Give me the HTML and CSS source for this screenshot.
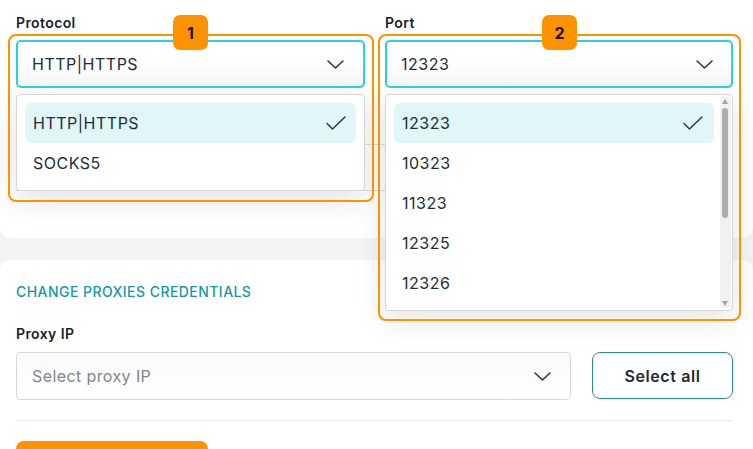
FILE: index.html
```html
<!DOCTYPE html>
<html>
<head>
<meta charset="utf-8">
<link rel="stylesheet" href="styles.css">
</head>
<body>
<div class="page">
  <section class="top-card">
    <div class="fields">
      <div class="field">
        <div class="label">Protocol</div>
        <div class="select active">
          <span class="value">HTTP|HTTPS</span>
          <svg class="chev" width="17" height="9" viewBox="0 0 17 9"><path d="M1 1l7.5 7 7.5-7" fill="none" stroke="#25343f" stroke-width="1.5" stroke-linecap="round" stroke-linejoin="round"/></svg>
        </div>
        <div class="menu">
          <div class="list">
            <div class="item selected"><span>HTTP|HTTPS</span>
              <svg width="20" height="14" viewBox="0 0 20 14"><path d="M1 7.5l5.5 5.5L19 1" fill="none" stroke="#25343f" stroke-width="1.4" stroke-linecap="round" stroke-linejoin="round"/></svg>
            </div>
            <div class="item"><span>SOCKS5</span></div>
          </div>
        </div>
      </div>
      <div class="field">
        <div class="label">Port</div>
        <div class="select active port">
          <span class="value">12323</span>
          <svg class="chev" width="17" height="9" viewBox="0 0 17 9"><path d="M1 1l7.5 7 7.5-7" fill="none" stroke="#25343f" stroke-width="1.5" stroke-linecap="round" stroke-linejoin="round"/></svg>
        </div>
        <div class="menu scrolling">
          <div class="list">
            <div class="item selected"><span>12323</span>
              <svg width="20" height="14" viewBox="0 0 20 14"><path d="M1 7.5l5.5 5.5L19 1" fill="none" stroke="#25343f" stroke-width="1.4" stroke-linecap="round" stroke-linejoin="round"/></svg>
            </div>
            <div class="item"><span>10323</span></div>
            <div class="item"><span>11323</span></div>
            <div class="item"><span>12325</span></div>
            <div class="item"><span>12326</span></div>
          </div>
          <div class="scrollbar">
            <span class="arrow up"></span>
            <span class="thumb"></span>
            <span class="arrow down"></span>
          </div>
        </div>
      </div>
    </div>
    <div class="hidden-row"></div>
  </section>

  <section class="bottom-card">
    <h2 class="section-title">CHANGE PROXIES CREDENTIALS</h2>
    <div class="label">Proxy IP</div>
    <div class="ip-row">
      <div class="select plain">
        <span class="placeholder">Select proxy IP</span>
        <svg class="chev" width="17" height="9" viewBox="0 0 17 9"><path d="M1 1l7.5 7 7.5-7" fill="none" stroke="#25343f" stroke-width="1.5" stroke-linecap="round" stroke-linejoin="round"/></svg>
      </div>
      <button class="btn-outline">Select all</button>
    </div>
    <hr class="divider">
    <button class="btn-primary"></button>
  </section>

  <div class="annot annot-1"></div>
  <div class="annot annot-2"></div>
  <div class="badge badge-1">1</div>
  <div class="badge badge-2">2</div>
</div>
</body>
</html>
```

FILE: styles.css
```css
* { box-sizing: border-box; }
html, body { margin: 0; padding: 0; }
body {
  background: #f3f4f5;
  font-family: Inter, "Noto Sans", "Liberation Sans", sans-serif;
  color: #1e2d36;
  width: 753px;
  height: 449px;
  overflow: hidden;
}
.page { position: relative; width: 753px; height: 449px; overflow: hidden; }

.top-card {
  position: relative;
  background: #fff;
  height: 238px;
  border-radius: 0 0 10px 10px;
  padding: 14px 20px 0 16px;
}
.fields {
  display: grid;
  grid-template-columns: 349px 348px;
  column-gap: 20px;
  position: relative;
  z-index: 2;
}
.field { position: relative; }
.label {
  font-size: 14px;
  font-weight: 600;
  line-height: 18px;
  height: 18px;
  letter-spacing: 0.4px;
  color: #17232b;
  margin-bottom: 8px;
}
.select {
  height: 48px;
  border-radius: 5px;
  display: flex;
  align-items: center;
  justify-content: space-between;
  background: #fff;
  font-size: 16px;
  letter-spacing: 0.5px;
}
.select.active {
  border: 2px solid #27d3e0;
  padding: 0 19px 0 14px;
  background: linear-gradient(#fff 40%, #f6f7f7);
}
.select.port { padding-right: 18px; }
.chev { display: block; }

.menu {
  position: absolute;
  top: 80px;
  left: 0;
  right: 0;
  background: #fff;
  border: 1px solid #d6d7d8;
  border-radius: 4px;
  box-shadow: 0 8px 30px rgba(30, 40, 50, 0.13);
  display: flex;
}
.list { flex: 1; padding: 8px 8px 7px 8px; }
.item {
  height: 40px;
  border-radius: 6px;
  display: flex;
  align-items: center;
  justify-content: space-between;
  padding: 0 10px 0 8px;
  font-size: 16px;
  letter-spacing: 0.5px;
}
.item.selected { background: #e0f6f9; }
.scrolling .list { padding-right: 6px; }
.scrolling .item { padding-right: 11px; }

.scrollbar {
  width: 11px;
  margin: 2px 1px 2px 0;
  background: #f1f1f1;
  border-radius: 2px;
  position: relative;
}
.thumb {
  position: absolute;
  left: 2px;
  top: 11px;
  width: 6px;
  height: 110px;
  background: #acacac;
  border-radius: 3px;
}
.arrow {
  position: absolute;
  left: 2px;
  width: 0;
  height: 0;
  border-left: 3.5px solid transparent;
  border-right: 3.5px solid transparent;
}
.arrow.up { top: 2px; border-bottom: 5px solid #a3a3a3; }
.arrow.down { bottom: 2px; border-top: 5px solid #a3a3a3; }

.hidden-row {
  margin-top: 56px;
  height: 47px;
  border-top: 1px solid #dedfe0;
  border-bottom: 1px solid #dedfe0;
}

.bottom-card {
  background: #fff;
  margin-top: 22px;
  border-radius: 10px 10px 0 0;
  padding: 24px 20px 0 16px;
  height: 189px;
  overflow: hidden;
}
.section-title {
  margin: 0 0 25px 0;
  font-size: 14px;
  font-weight: 500;
  line-height: 16px;
  letter-spacing: 0.45px;
  color: #1598a5;
}
.bottom-card .label { margin-bottom: 9px; }
.ip-row {
  display: flex;
  gap: 21px;
  height: 48px;
}
.select.plain {
  width: 555px;
  border: 1px solid #d6d8da;
  border-radius: 4px;
  padding: 0 19px 0 15px;
  background: linear-gradient(#fafafa, #fff);
}
.placeholder { color: #7f868b; letter-spacing: 0.4px; }
.btn-outline {
  width: 141px;
  height: 47px;
  border: 1px solid #1c909c;
  border-radius: 8px;
  background: #fff;
  font-family: inherit;
  font-size: 16px;
  font-weight: 600;
  color: #1b2a33;
  letter-spacing: 0.6px;
}
.divider {
  margin: 20px 0 0 0;
  border: 0;
  border-top: 1px solid #e6e8ea;
  height: 0;
}
.btn-primary {
  display: block;
  margin-top: 20px;
  width: 192px;
  height: 40px;
  border: 0;
  border-radius: 8px;
  background: #ff9200;
}

.annot {
  position: absolute;
  border: 2px solid #ff9200;
  border-radius: 8px;
  z-index: 5;
  pointer-events: none;
}
.annot-1 { left: 8px; top: 34px; width: 366px; height: 168px; }
.annot-2 { left: 378px; top: 34px; width: 363px; height: 287px; }
.badge {
  position: absolute;
  top: 15px;
  width: 35px;
  height: 35px;
  border-radius: 7px;
  background: #ff9200;
  color: #141414;
  font-size: 16px;
  font-weight: 700;
  display: flex;
  align-items: center;
  justify-content: center;
  z-index: 6;
}
.badge-1 { left: 173px; }
.badge-2 { left: 542px; }
```
